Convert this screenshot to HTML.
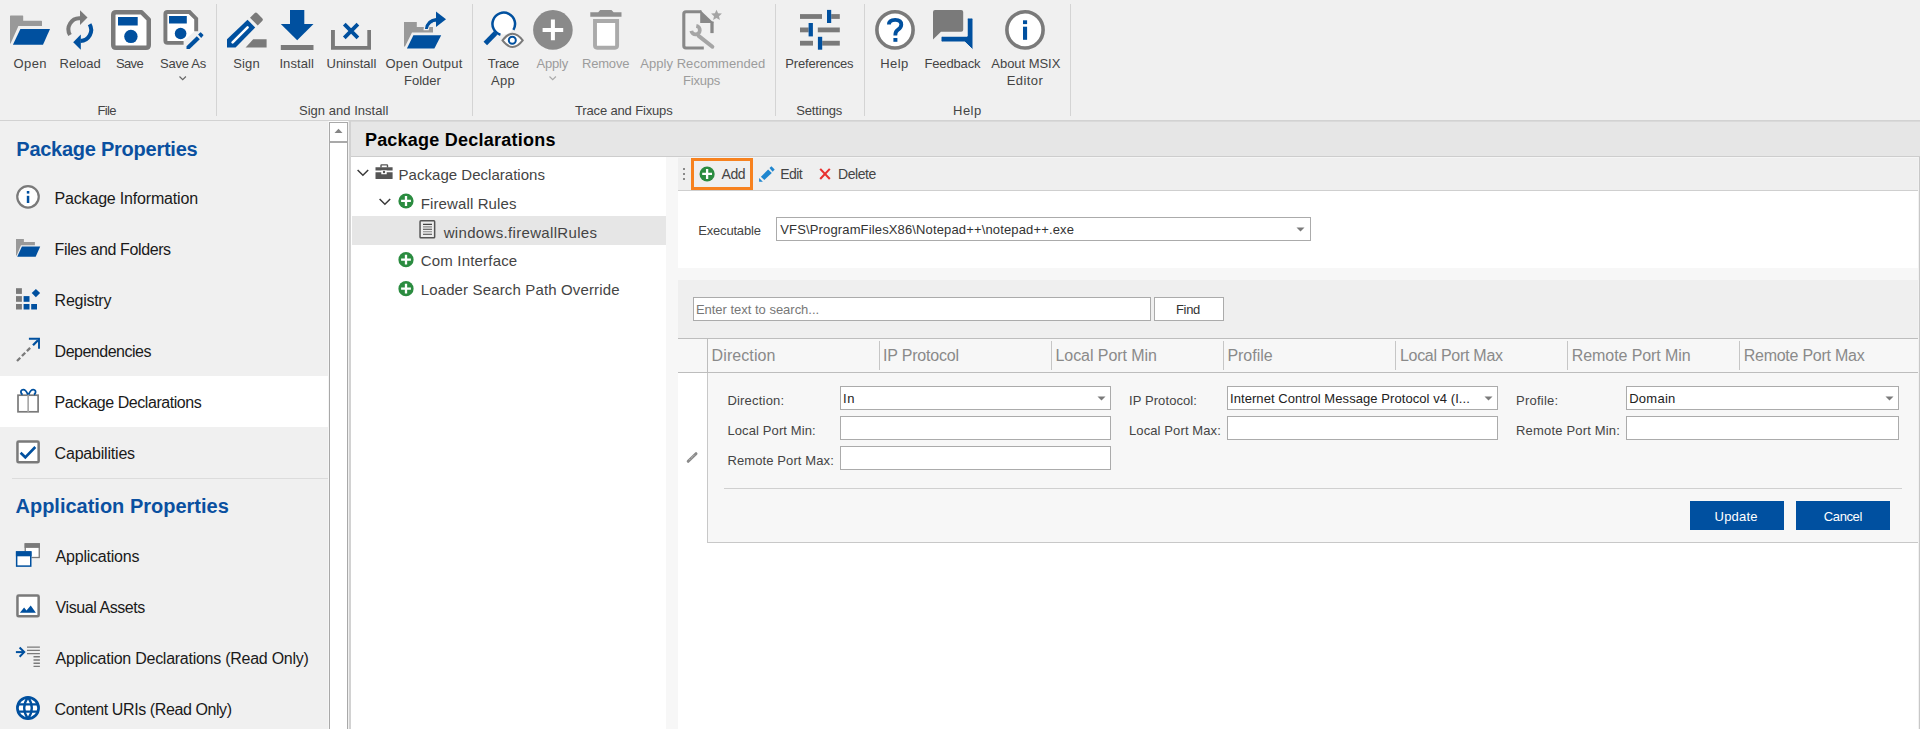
<!DOCTYPE html>
<html><head><meta charset="utf-8"><style>
*{margin:0;padding:0;box-sizing:border-box}
html,body{width:1920px;height:729px;overflow:hidden;background:#fff;font-family:"Liberation Sans",sans-serif}
.a{position:absolute}
.t{position:absolute;white-space:nowrap;font-family:"Liberation Sans",sans-serif}
svg{position:absolute;overflow:visible}
</style></head><body>
<!-- ribbon -->
<div class=a style="left:0;top:0;width:1920px;height:120px;background:#f0f0f0"></div>
<div class=a style="left:0;top:120px;width:1920px;height:1px;background:#d2d2d2"></div>
<div class=a style="left:216px;top:4px;width:1px;height:112px;background:#d4d4d4"></div>
<div class=a style="left:472px;top:4px;width:1px;height:112px;background:#d4d4d4"></div>
<div class=a style="left:775px;top:4px;width:1px;height:112px;background:#d4d4d4"></div>
<div class=a style="left:864px;top:4px;width:1px;height:112px;background:#d4d4d4"></div>
<div class=a style="left:1070px;top:4px;width:1px;height:112px;background:#d4d4d4"></div>
<!-- sidebar -->
<div class=a style="left:0;top:121px;width:329px;height:608px;background:#f0f0f0"></div>
<div class=a style="left:0;top:376px;width:328px;height:51px;background:#fff"></div>
<div class=a style="left:12px;top:478px;width:316px;height:1px;background:#dcdcdc"></div>
<div class=a style="left:328px;top:121px;width:1px;height:608px;background:#f6f6f6"></div>
<!-- scrollbar -->
<div class=a style="left:329px;top:122px;width:19px;height:607px;background:#fff;border:1px solid #a9a9a9;border-bottom:0"></div>
<div class=a style="left:329px;top:141px;width:19px;height:2px;background:#a9a9a9"></div>
<svg style="left:334px;top:128px" width="9" height="6"><path d="M0.5,5 L4.5,0.8 L8.5,5 Z" fill="#858585"/></svg>
<div class=a style="left:348px;top:121px;width:1px;height:608px;background:#f0f0f0"></div>
<div class=a style="left:349px;top:121px;width:2px;height:608px;background:#d2d2d2"></div>
<!-- header -->
<div class=a style="left:351px;top:121px;width:1569px;height:35px;background:#e6e6e6;border-top:1px solid #d9d9d9"></div>
<div class=a style="left:351px;top:156px;width:1569px;height:1px;background:#cdcdcd"></div>
<!-- tree panel -->
<div class=a style="left:351px;top:157px;width:315px;height:572px;background:#fff"></div>
<div class=a style="left:352px;top:216px;width:314px;height:29px;background:#e6e6e6"></div>
<div class=a style="left:666px;top:157px;width:12px;height:572px;background:#f7f7f7"></div>
<!-- right panel -->
<div class=a style="left:678px;top:157px;width:1242px;height:572px;background:#fff"></div>
<div class=a style="left:678px;top:157px;width:1240px;height:33px;background:#efefef;border-top:1px solid #f5f5f5"></div>
<div class=a style="left:678px;top:190px;width:1240px;height:1px;background:#cfcfcf"></div>
<div class=a style="left:1918px;top:157px;width:1px;height:572px;background:#f2f2f2"></div><div class=a style="left:1919px;top:157px;width:1px;height:572px;background:#c8c8c8"></div>
<div class=a style="left:678px;top:268px;width:1240px;height:12px;background:#f7f7f7"></div>
<div class=a style="left:678px;top:280px;width:1240px;height:58px;background:#efefef"></div>
<!-- exec combo -->
<div class=a style="left:776px;top:217px;width:535px;height:24px;background:#fff;border:1px solid #ababab"></div>
<svg style="left:1296px;top:227px" width="9" height="5"><path d="M0.5,0.5 H8.5 L4.5,4.5 Z" fill="#7a7a7a"/></svg>
<!-- search -->
<div class=a style="left:693px;top:297px;width:458px;height:24px;background:#fff;border:1px solid #ababab"></div>
<div class=a style="left:1154px;top:297px;width:70px;height:24px;background:#fff;border:1px solid #ababab"></div>
<!-- grid header -->
<div class=a style="left:678px;top:338px;width:1240px;height:1px;background:#bdbdbd"></div>
<div class=a style="left:678px;top:339px;width:1240px;height:33px;background:#f7f7f7"></div>
<div class=a style="left:678px;top:372px;width:1240px;height:1px;background:#bdbdbd"></div>
<div class=a style="left:707px;top:339px;width:1px;height:33px;background:#bdbdbd"></div>
<div class=a style="left:879px;top:341px;width:1px;height:29px;background:#c6c6c6"></div>
<div class=a style="left:1051px;top:341px;width:1px;height:29px;background:#c6c6c6"></div>
<div class=a style="left:1223px;top:341px;width:1px;height:29px;background:#c6c6c6"></div>
<div class=a style="left:1395px;top:341px;width:1px;height:29px;background:#c6c6c6"></div>
<div class=a style="left:1567px;top:341px;width:1px;height:29px;background:#c6c6c6"></div>
<div class=a style="left:1739px;top:341px;width:1px;height:29px;background:#c6c6c6"></div>
<!-- edit form -->
<div class=a style="left:707px;top:373px;width:1211px;height:170px;background:#f7f7f7;border-left:1px solid #c8c8c8;border-bottom:1px solid #c8c8c8"></div>
<div class=a style="left:724px;top:488px;width:1178px;height:1px;background:#d0d0d0"></div>
<div class=a style="left:840px;top:386px;width:271px;height:24px;background:#fff;border:1px solid #ababab"></div>
<div class=a style="left:840px;top:416px;width:271px;height:24px;background:#fff;border:1px solid #ababab"></div>
<div class=a style="left:840px;top:446px;width:271px;height:24px;background:#fff;border:1px solid #ababab"></div>
<div class=a style="left:1227px;top:386px;width:271px;height:24px;background:#fff;border:1px solid #ababab"></div>
<div class=a style="left:1227px;top:416px;width:271px;height:24px;background:#fff;border:1px solid #ababab"></div>
<div class=a style="left:1626px;top:386px;width:273px;height:24px;background:#fff;border:1px solid #ababab"></div>
<div class=a style="left:1626px;top:416px;width:273px;height:24px;background:#fff;border:1px solid #ababab"></div>
<svg style="left:1097px;top:396px" width="9" height="5"><path d="M0.5,0.5 H8.5 L4.5,4.5 Z" fill="#7a7a7a"/></svg>
<svg style="left:1484px;top:396px" width="9" height="5"><path d="M0.5,0.5 H8.5 L4.5,4.5 Z" fill="#7a7a7a"/></svg>
<svg style="left:1885px;top:396px" width="9" height="5"><path d="M0.5,0.5 H8.5 L4.5,4.5 Z" fill="#7a7a7a"/></svg>
<div class=a style="left:1690px;top:501px;width:94px;height:29px;background:#0050a0"></div>
<div class=a style="left:1796px;top:501px;width:94px;height:29px;background:#0050a0"></div>
<!-- ribbon icons; svg placed at 0,0 using absolute coordinates -->
<svg style="left:0;top:0" width="1100" height="60" viewBox="0 0 1100 60">
 <!-- Open -->
 <path d="M10.6,15.6 H22.6 Q23.2,15.6 23.2,16.2 V20.8 H41.4 Q42,20.8 42,21.4 V25.9 H18.4 L10.6,43.4 H10 V16.2 Q10,15.6 10.6,15.6 Z" fill="#999"/>
 <path d="M20.4,29 H50 L43,44.8 H12.9 Z" fill="#00509f"/>
 <!-- Reload -->
 <path d="M70,34.9 A11,11 0 0 1 80.3,18.3" fill="none" stroke="#7a7a7a" stroke-width="4"/>
 <path d="M80,10.3 L87.5,17.6 L80,24.9 Z" fill="#7a7a7a"/>
 <path d="M89.6,24.3 A11,11 0 0 1 80.5,40.9" fill="none" stroke="#00509f" stroke-width="4"/>
 <path d="M80.8,34.5 L73.2,42.3 L80.8,49.8 Z" fill="#00509f"/>
 <!-- Save -->
 <path d="M116,12.25 H141.5 L148.75,19.5 V45 Q148.75,47.75 146,47.75 H116 Q113.25,47.75 113.25,45 V15 Q113.25,12.25 116,12.25 Z" fill="#fff" stroke="#7a7a7a" stroke-width="4.5" stroke-linejoin="round"/>
 <rect x="118" y="17" width="19.7" height="8.5" fill="#00509f"/>
 <circle cx="130.9" cy="36.4" r="6.7" fill="#00509f"/>
 <!-- Save As -->
 <path d="M167.3,13.9 H189 L194.3,19.4 V31.5 L183.5,41 H167.3 Z" fill="#fff"/>
 <path d="M183.6,42.9 H167.5 Q165.4,42.9 165.4,40.8 V14.1 Q165.4,12 167.5,12 H189.5 L196.2,18.7 V31.3" fill="none" stroke="#7a7a7a" stroke-width="3.9"/>
 <rect x="169" y="16" width="17.8" height="7.5" fill="#00509f"/>
 <circle cx="180.6" cy="33.5" r="5.8" fill="#00509f"/>
 <path d="M186.5,46.2 L196.8,36.2 L199.8,39.3 L189.6,48.9 H186.5 Z" fill="#00509f"/>
 <path d="M198.1,34.5 L200.2,32.5 Q200.6,32.1 201,32.5 L203.3,34.8 Q203.7,35.2 203.3,35.6 L201.2,37.9 Z" fill="#00509f"/>
 <!-- Sign -->
 <path d="M227,47.5 V39.3 L247.5,19.8 L255.2,27.6 L235.6,47.5 Z" fill="#00509f"/>
 <path d="M232.6,42.3 L247.6,27.3" stroke="#fff" stroke-width="2.6" stroke-linecap="round"/>
 <path d="M250,17.8 L254.5,13.3 Q255.9,11.9 257.3,13.3 L262.2,18.2 Q263.6,19.6 262.2,21 L257.7,25.5 Z" fill="#7a7a7a"/>
 <path d="M245.6,47.5 L253.2,39.3 H266.6 V47.5 Z" fill="#7a7a7a"/>
 <!-- Install -->
 <rect x="290" y="10" width="14.3" height="14.5" fill="#00509f"/>
 <path d="M280.8,24 H313.5 L297.2,40.2 Z" fill="#00509f"/>
 <rect x="280.8" y="45" width="32.7" height="5" fill="#7a7a7a"/>
 <!-- Uninstall -->
 <path d="M331,29.9 H334.9 V45.9 H367.3 V29.9 H371 V49.7 H331 Z" fill="#7a7a7a"/>
 <path d="M344.3,24.2 L357.9,37.9 M357.9,24.2 L344.3,37.9" stroke="#00509f" stroke-width="3.8"/>
 <!-- Open Output Folder -->
 <path d="M404,21.9 H416.8 V27 H433 V32.4 H412 L405,46.5 H404 Z" fill="#999"/>
 <path d="M413.4,35.2 H441.2 L434.4,48.6 H406.9 Z" fill="#00509f"/>
 <path d="M424.2,29.6 Q425,18.4 437,17.2 L437.5,22 Q429.5,22.2 428.2,29.6 Z" fill="#00509f" stroke="#f0f0f0" stroke-width="1.2"/>
 <path d="M436,11.5 L446,19.2 L436,27 Z" fill="#00509f"/>
 <!-- Trace App -->
 <path d="M485.3,43.4 L495.6,33.1" stroke="#00509f" stroke-width="5"/>
 <circle cx="503.7" cy="23.9" r="10.5" fill="#fff"/>
 <path d="M513.4,29.8 A11.3,11.3 0 1 0 500.45,34.7" fill="none" stroke="#00509f" stroke-width="2.5"/>
 <path d="M502.5,40.3 Q512.6,27 522.7,40.3 Q512.6,53.6 502.5,40.3 Z" fill="#fff" stroke="#7a7a7a" stroke-width="2"/>
 <circle cx="512.3" cy="40.3" r="3.5" fill="#fff" stroke="#00509f" stroke-width="2"/>
 <!-- Apply -->
 <circle cx="552.9" cy="29.9" r="19.8" fill="#8a8a8a"/>
 <path d="M542.6,29.9 H563.2 M552.9,19.6 V40.2" stroke="#fff" stroke-width="4"/>
 <!-- Remove -->
 <path d="M590.3,12.2 H598.2 L600.2,9.9 H611.5 L613.6,12.2 H621.5 V16.7 H590.3 Z" fill="#8f8f8f"/>
 <path d="M595,21 H617.1 V45.6 Q617.1,47.7 615,47.7 H597.1 Q595,47.7 595,45.6 Z" fill="#fff" stroke="#aaa" stroke-width="3.9"/>
 <!-- Fixups -->
 <path d="M703.8,48 H686 Q683.8,48 683.8,45.8 V13.9 Q683.8,11.7 686,11.7 H701.5" fill="none" stroke="#888" stroke-width="3.1"/>
 <path d="M712,21.5 V33.1" stroke="#888" stroke-width="3.3"/>
 <path d="M700.2,10.1 L713.8,23 H700.2 Z" fill="#888"/>
 <path d="M698.6,35.9 L712.4,46.8" stroke="#a5a5a5" stroke-width="3.9" stroke-linecap="round"/>
 <path d="M696.3,25.9 A4.3,4.3 0 1 1 691.3,30.9" fill="none" stroke="#a5a5a5" stroke-width="3.7"/>
 <path d="M716.5,9.8 L718.1,13.3 L721.9,13.6 L719,16.2 L719.9,19.9 L716.5,17.9 L713.1,19.9 L714,16.2 L711.1,13.6 L714.9,13.3 Z" fill="#a5a5a5"/>
 <!-- Preferences -->
 <g fill="#7a7a7a">
  <rect x="800" y="14.1" width="22" height="4.8"/><rect x="831.2" y="14.1" width="8.6" height="4.8"/>
  <rect x="800" y="27.5" width="8.6" height="4.8"/><rect x="817.8" y="27.5" width="22" height="4.8"/>
  <rect x="800" y="40.8" width="13" height="4.8"/><rect x="822.2" y="40.8" width="17.6" height="4.8"/>
 </g>
 <g fill="#00509f">
  <rect x="827" y="9.9" width="4.2" height="13.1"/>
  <rect x="808.6" y="23" width="4.3" height="13.4"/>
  <rect x="817.9" y="36.8" width="4.3" height="12.9"/>
 </g>
 <!-- Help -->
 <circle cx="895" cy="29.9" r="18.1" fill="#fff" stroke="#7a7a7a" stroke-width="3.6"/>
 <path d="M888.9,24.6 Q888.9,19.8 895.2,19.8 Q901.3,19.8 901.3,24.6 Q901.3,27.6 897.8,29.9 Q895.3,31.5 895.3,35.4" fill="none" stroke="#00509f" stroke-width="3.8"/>
 <rect x="893.4" y="38" width="4" height="3.8" fill="#00509f"/>
 <!-- Feedback -->
 <path d="M935,9.9 H961.2 Q963.2,9.9 963.2,11.9 V29.8 Q963.2,31.8 961.2,31.8 H941 L933,39.5 V11.9 Q933,9.9 935,9.9 Z" fill="#7a7a7a"/>
 <path d="M967.2,19.2 Q967.2,18 968.4,18 H971.8 Q973,18 973,19.2 V49.9 L964.8,42 H942.5 Q941,42 941,40.5 V37.7 Q941,36.2 942.5,36.2 H967.2 Z" fill="#00509f" stroke="#f0f0f0" stroke-width="1"/>
 <!-- About -->
 <circle cx="1025" cy="29.9" r="18.1" fill="#fff" stroke="#7a7a7a" stroke-width="3.6"/>
 <rect x="1023" y="20.3" width="4.1" height="3.8" fill="#00509f"/>
 <rect x="1023" y="26.7" width="4.1" height="13.1" fill="#00509f"/>
 <!-- dropdown chevrons -->
 <path d="M179.5,76.5 L182.7,79.6 L185.9,76.5" fill="none" stroke="#666" stroke-width="1.2"/>
 <path d="M549.5,76.5 L552.7,79.6 L555.9,76.5" fill="none" stroke="#aaa" stroke-width="1.2"/>
</svg>

<svg style="left:0;top:120px" width="1920" height="609" viewBox="0 120 1920 609">
 <!-- sidebar: info -->
 <circle cx="28" cy="196.8" r="10.75" fill="#fff" stroke="#7a7a7a" stroke-width="2.2"/>
 <rect x="26.8" y="191" width="2.5" height="2.6" fill="#00509f"/>
 <rect x="26.8" y="195.8" width="2.5" height="7.2" fill="#00509f"/>
 <!-- folder -->
 <path d="M16,238.9 H23.9 V242.1 H34.9 V245.2 H21 L16.7,255.5 H16 Z" fill="#999"/>
 <path d="M21.9,246.6 H40.2 L35.7,256.7 H17.2 Z" fill="#00509f"/>
 <!-- registry -->
 <g fill="#7a7a7a"><rect x="16" y="288.2" width="5.9" height="5.7"/><rect x="16" y="296.1" width="5.9" height="5.7"/><rect x="16" y="304" width="5.9" height="5.5"/></g>
 <g fill="#00509f"><rect x="23.6" y="296.1" width="5.9" height="5.7"/><rect x="23.6" y="304" width="5.9" height="5.5"/><rect x="31.2" y="304" width="5.8" height="5.5"/>
 <path d="M35.9,288.9 L40.1,293.1 L35.9,297.3 L31.7,293.1 Z"/></g>
 <!-- dependencies -->
 <path d="M17,361 L31.5,346.5" stroke="#7a7a7a" stroke-width="2.3" stroke-dasharray="4.6 2.4"/>
 <path d="M33,345.3 L38,340.3" stroke="#00509f" stroke-width="2.3"/>
 <path d="M28.9,338.8 H39 V348.8" fill="none" stroke="#00509f" stroke-width="1.9"/>
 <!-- gift -->
 <rect x="18" y="395.2" width="20.1" height="16.6" fill="#fff" stroke="#7a7a7a" stroke-width="1.7"/>
 <rect x="27.3" y="395.2" width="1.7" height="16.6" fill="#aaa"/>
 <path d="M27.9,394.6 C26.5,391 24.8,389.6 23.2,389.6 C21.2,389.6 20.6,391.4 21.1,392.9 C21.4,393.8 22,394.3 22.6,394.6 M28.6,394.6 C30,391 31.7,389.6 33.3,389.6 C35.3,389.6 35.9,391.4 35.4,392.9 C35.1,393.8 34.5,394.3 33.9,394.6" fill="none" stroke="#00509f" stroke-width="1.8"/>
 <!-- checkbox -->
 <rect x="17.45" y="441.45" width="21.2" height="20.9" rx="1.2" fill="#fff" stroke="#7a7a7a" stroke-width="2.5"/>
 <path d="M20.6,452.8 L25.3,457.3 L35.3,447" fill="none" stroke="#00509f" stroke-width="2.6"/>
 <!-- applications -->
 <rect x="25.25" y="543.9" width="14" height="13.6" fill="#fff" stroke="#7a7a7a" stroke-width="1.3"/>
 <rect x="24.6" y="543.2" width="15.3" height="4.7" fill="#7a7a7a"/>
 <rect x="15.9" y="551.3" width="15.6" height="15.6" fill="#f0f0f0"/>
 <rect x="16.65" y="552" width="14.1" height="14.1" fill="#fff" stroke="#00509f" stroke-width="1.5"/>
 <rect x="15.9" y="551.3" width="15.6" height="5" fill="#00509f"/>
 <!-- visual assets -->
 <rect x="17.45" y="595.45" width="21.2" height="20.9" rx="1.2" fill="#fff" stroke="#7a7a7a" stroke-width="2.5"/>
 <path d="M19.9,612.7 L24.1,607.6 L26.5,610.5 L30.7,605.6 L35.9,612.7 Z" fill="#00509f"/>
 <!-- app declarations -->
 <path d="M15.9,652.1 H23.5" stroke="#00509f" stroke-width="2"/>
 <path d="M19.6,647.5 L24.2,652.1 L19.6,656.7" fill="none" stroke="#00509f" stroke-width="2"/>
 <g stroke="#7a7a7a" stroke-width="1.4">
  <path d="M27,647.1 H39.9 M27,650.4 H39.9 M27,653.6 H39.9 M33.5,656.8 H39.9 M33.5,660 H39.9 M33.5,663.2 H39.9 M33.5,666.4 H39.9"/>
 </g>
 <!-- globe -->
 <circle cx="28" cy="708" r="10.6" fill="#fff" stroke="#00509f" stroke-width="2.7"/>
 <path d="M17,704.3 H39 M17,711.6 H39" stroke="#00509f" stroke-width="2.3"/>
 <path d="M28,697 Q20.4,708 28,719 M28,697 Q35.6,708 28,719" fill="none" stroke="#00509f" stroke-width="2.3"/>
 <!-- tree -->
 <path d="M357.6,170 L362.9,175.3 L368.2,170" fill="none" stroke="#3a3a3a" stroke-width="1.5"/>
 <path d="M379.6,199 L384.9,204.3 L390.2,199" fill="none" stroke="#3a3a3a" stroke-width="1.5"/>
 <path d="M381,167.4 V165.5 Q381,164.9 381.6,164.9 H386.9 Q387.5,164.9 387.5,165.5 V167.4" fill="none" stroke="#555" stroke-width="1.4"/>
 <path d="M375.5,167.2 H392.6 V170.6 H386.6 V170.2 H381.4 V170.6 H375.5 Z" fill="#555"/>
 <path d="M375.5,172.3 H381.3 V174.2 H386.7 V172.3 H392.6 V178.6 Q392.6,179.1 392.1,179.1 H376 Q375.5,179.1 375.5,178.6 Z" fill="#555"/>
 <circle cx="384" cy="172" r="1.2" fill="#555"/>
 <g>
  <circle cx="406" cy="201" r="7.6" fill="#2b8c40"/>
  <path d="M401.1,200.9 H410.9 M406,196.1 V205.9" stroke="#fff" stroke-width="2.3"/>
  <circle cx="406" cy="259.7" r="7.6" fill="#2b8c40"/>
  <path d="M401.1,259.6 H410.9 M406,254.8 V264.6" stroke="#fff" stroke-width="2.3"/>
  <circle cx="406" cy="288.7" r="7.6" fill="#2b8c40"/>
  <path d="M401.1,288.6 H410.9 M406,283.8 V293.6" stroke="#fff" stroke-width="2.3"/>
 </g>
 <rect x="420.05" y="220.85" width="14.6" height="17" rx="0.8" fill="#eee" stroke="#555" stroke-width="1.5"/>
 <path d="M423,224.4 H432 M423,229.3 H432 M423,234.3 H432" stroke="#444" stroke-width="1.1"/>
 <path d="M423,226.9 H432 M423,231.8 H432" stroke="#888" stroke-width="1.1"/>
 <!-- toolbar -->
 <g fill="#8a8a8a"><rect x="683" y="168" width="2" height="2"/><rect x="683" y="173" width="2" height="2"/><rect x="683" y="178" width="2" height="2"/></g>
 <rect x="692.5" y="159.5" width="59" height="29" fill="none" stroke="#f7821f" stroke-width="3"/>
 <circle cx="707.1" cy="174" r="7.6" fill="#2b8c40"/>
 <path d="M702.2,173.9 H712 M707.1,169.1 V178.9" stroke="#fff" stroke-width="2.3"/>
 <path d="M760.9,176.8 L768.1,169.6 L771.8,172.9 L764.3,180.1 Z" fill="#1f86cf"/>
 <path d="M769.5,168.1 L771.4,166.3 L774.7,169.6 L772.6,171.7 Z" fill="#1f86cf"/>
 <path d="M759.1,178.1 L762.9,181.8 H759.1 Z" fill="#1f86cf"/>
 <path d="M820.2,168.9 L829.8,179 M829.8,168.9 L820.2,179" stroke="#e8312f" stroke-width="2.1"/>
 <!-- form pencil -->
 <path d="M688.2,461.3 L696,453.7" stroke="#8a8a8a" stroke-width="3" stroke-linecap="round"/>
 <path d="M689.5,459.8 L694.8,454.6" stroke="#ddd" stroke-width="0.8" stroke-dasharray="1 1"/>
</svg>


<div class=t style='left:13.60px;top:51.00px;font-size:13px;line-height:26px;font-weight:normal;color:#444;letter-spacing:0.367px'>Open</div><div class=t style='left:59.50px;top:51.00px;font-size:13px;line-height:26px;font-weight:normal;color:#444;letter-spacing:0.020px'>Reload</div><div class=t style='left:116.00px;top:51.00px;font-size:13px;line-height:26px;font-weight:normal;color:#444;letter-spacing:-0.667px'>Save</div><div class=t style='left:160.00px;top:51.00px;font-size:13px;line-height:26px;font-weight:normal;color:#444;letter-spacing:-0.250px'>Save As</div><div class=t style='left:233.30px;top:51.00px;font-size:13px;line-height:26px;font-weight:normal;color:#444;letter-spacing:0.100px'>Sign</div><div class=t style='left:279.40px;top:51.00px;font-size:13px;line-height:26px;font-weight:normal;color:#444;letter-spacing:0.100px'>Install</div><div class=t style='left:326.50px;top:51.00px;font-size:13px;line-height:26px;font-weight:normal;color:#444;letter-spacing:0.000px'>Uninstall</div><div class=t style='left:385.50px;top:51.00px;font-size:13px;line-height:26px;font-weight:normal;color:#444;letter-spacing:0.250px'>Open Output</div><div class=t style='left:404.00px;top:67.50px;font-size:13px;line-height:26px;font-weight:normal;color:#444;letter-spacing:0.000px'>Folder</div><div class=t style='left:487.80px;top:51.00px;font-size:13px;line-height:26px;font-weight:normal;color:#444;letter-spacing:-0.300px'>Trace</div><div class=t style='left:491.00px;top:67.50px;font-size:13px;line-height:26px;font-weight:normal;color:#444;letter-spacing:0.250px'>App</div><div class=t style='left:536.50px;top:51.00px;font-size:13px;line-height:26px;font-weight:normal;color:#9c9c9c;letter-spacing:-0.200px'>Apply</div><div class=t style='left:582.00px;top:51.00px;font-size:13px;line-height:26px;font-weight:normal;color:#9c9c9c;letter-spacing:-0.200px'>Remove</div><div class=t style='left:640.30px;top:51.00px;font-size:13px;line-height:26px;font-weight:normal;color:#9c9c9c;letter-spacing:0.044px'>Apply Recommended</div><div class=t style='left:683.00px;top:67.50px;font-size:13px;line-height:26px;font-weight:normal;color:#9c9c9c;letter-spacing:-0.200px'>Fixups</div><div class=t style='left:785.30px;top:51.00px;font-size:13px;line-height:26px;font-weight:normal;color:#444;letter-spacing:-0.180px'>Preferences</div><div class=t style='left:880.30px;top:51.00px;font-size:13px;line-height:26px;font-weight:normal;color:#444;letter-spacing:0.367px'>Help</div><div class=t style='left:924.50px;top:51.00px;font-size:13px;line-height:26px;font-weight:normal;color:#444;letter-spacing:-0.157px'>Feedback</div><div class=t style='left:991.30px;top:51.00px;font-size:13px;line-height:26px;font-weight:normal;color:#444;letter-spacing:-0.033px'>About MSIX</div><div class=t style='left:1006.80px;top:67.50px;font-size:13px;line-height:26px;font-weight:normal;color:#444;letter-spacing:0.400px'>Editor</div><div class=t style='left:97.60px;top:98.00px;font-size:13px;line-height:26px;font-weight:normal;color:#444;letter-spacing:-0.700px'>File</div><div class=t style='left:299.00px;top:98.00px;font-size:13px;line-height:26px;font-weight:normal;color:#444;letter-spacing:0.027px'>Sign and Install</div><div class=t style='left:575.00px;top:98.00px;font-size:13px;line-height:26px;font-weight:normal;color:#444;letter-spacing:-0.153px'>Trace and Fixups</div><div class=t style='left:796.20px;top:98.00px;font-size:13px;line-height:26px;font-weight:normal;color:#444;letter-spacing:-0.114px'>Settings</div><div class=t style='left:953.00px;top:98.00px;font-size:13px;line-height:26px;font-weight:normal;color:#444;letter-spacing:0.500px'>Help</div><div class=t style='left:16.30px;top:128.50px;font-size:20px;line-height:40px;font-weight:bold;color:#0a50a0;letter-spacing:-0.253px'>Package Properties</div><div class=t style='left:54.60px;top:183.30px;font-size:16px;line-height:32px;font-weight:normal;color:#1a1a1a;letter-spacing:-0.183px'>Package Information</div><div class=t style='left:54.60px;top:234.30px;font-size:16px;line-height:32px;font-weight:normal;color:#1a1a1a;letter-spacing:-0.387px'>Files and Folders</div><div class=t style='left:54.60px;top:285.30px;font-size:16px;line-height:32px;font-weight:normal;color:#1a1a1a;letter-spacing:-0.271px'>Registry</div><div class=t style='left:54.60px;top:336.30px;font-size:16px;line-height:32px;font-weight:normal;color:#1a1a1a;letter-spacing:-0.500px'>Dependencies</div><div class=t style='left:54.60px;top:387.30px;font-size:16px;line-height:32px;font-weight:normal;color:#1a1a1a;letter-spacing:-0.447px'>Package Declarations</div><div class=t style='left:54.60px;top:438.30px;font-size:16px;line-height:32px;font-weight:normal;color:#1a1a1a;letter-spacing:-0.200px'>Capabilities</div><div class=t style='left:15.50px;top:486.00px;font-size:20px;line-height:40px;font-weight:bold;color:#0a50a0;letter-spacing:-0.005px'>Application Properties</div><div class=t style='left:55.60px;top:540.80px;font-size:16px;line-height:32px;font-weight:normal;color:#1a1a1a;letter-spacing:-0.218px'>Applications</div><div class=t style='left:55.60px;top:591.80px;font-size:16px;line-height:32px;font-weight:normal;color:#1a1a1a;letter-spacing:-0.425px'>Visual Assets</div><div class=t style='left:55.60px;top:642.80px;font-size:16px;line-height:32px;font-weight:normal;color:#1a1a1a;letter-spacing:-0.260px'>Application Declarations (Read Only)</div><div class=t style='left:54.60px;top:693.80px;font-size:16px;line-height:32px;font-weight:normal;color:#1a1a1a;letter-spacing:-0.404px'>Content URIs (Read Only)</div><div class=t style='left:364.90px;top:122.00px;font-size:18px;line-height:36px;font-weight:bold;color:#000;letter-spacing:0.232px'>Package Declarations</div><div class=t style='left:398.60px;top:160.00px;font-size:15px;line-height:30px;font-weight:normal;color:#444;letter-spacing:0.021px'>Package Declarations</div><div class=t style='left:420.70px;top:188.80px;font-size:15px;line-height:30px;font-weight:normal;color:#444;letter-spacing:0.123px'>Firewall Rules</div><div class=t style='left:443.70px;top:217.60px;font-size:15px;line-height:30px;font-weight:normal;color:#444;letter-spacing:0.330px'>windows.firewallRules</div><div class=t style='left:420.70px;top:246.40px;font-size:15px;line-height:30px;font-weight:normal;color:#444;letter-spacing:0.192px'>Com Interface</div><div class=t style='left:420.70px;top:275.20px;font-size:15px;line-height:30px;font-weight:normal;color:#444;letter-spacing:0.142px'>Loader Search Path Override</div><div class=t style='left:721.50px;top:160.00px;font-size:14px;line-height:28px;font-weight:normal;color:#444;letter-spacing:-0.400px'>Add</div><div class=t style='left:780.20px;top:160.00px;font-size:14px;line-height:28px;font-weight:normal;color:#444;letter-spacing:-0.533px'>Edit</div><div class=t style='left:838.00px;top:160.00px;font-size:14px;line-height:28px;font-weight:normal;color:#444;letter-spacing:-0.460px'>Delete</div><div class=t style='left:698.20px;top:218.20px;font-size:13px;line-height:26px;font-weight:normal;color:#444;letter-spacing:-0.178px'>Executable</div><div class=t style='left:780.30px;top:216.80px;font-size:13px;line-height:26px;font-weight:normal;color:#333;letter-spacing:0.143px'>VFS\ProgramFilesX86\Notepad++\notepad++.exe</div><div class=t style='left:695.90px;top:297.30px;font-size:13px;line-height:26px;font-weight:normal;color:#777;letter-spacing:-0.014px'>Enter text to search...</div><div class=t style='left:1176.00px;top:297.20px;font-size:13px;line-height:26px;font-weight:normal;color:#333;letter-spacing:-0.333px'>Find</div><div class=t style='left:711.60px;top:340.30px;font-size:16px;line-height:32px;font-weight:normal;color:#8a8a8a;letter-spacing:0.087px'>Direction</div><div class=t style='left:883.00px;top:340.30px;font-size:16px;line-height:32px;font-weight:normal;color:#8a8a8a;letter-spacing:-0.200px'>IP Protocol</div><div class=t style='left:1055.50px;top:340.30px;font-size:16px;line-height:32px;font-weight:normal;color:#8a8a8a;letter-spacing:-0.069px'>Local Port Min</div><div class=t style='left:1227.40px;top:340.30px;font-size:16px;line-height:32px;font-weight:normal;color:#8a8a8a;letter-spacing:-0.017px'>Profile</div><div class=t style='left:1399.90px;top:340.30px;font-size:16px;line-height:32px;font-weight:normal;color:#8a8a8a;letter-spacing:-0.277px'>Local Port Max</div><div class=t style='left:1571.80px;top:340.30px;font-size:16px;line-height:32px;font-weight:normal;color:#8a8a8a;letter-spacing:-0.086px'>Remote Port Min</div><div class=t style='left:1743.70px;top:340.30px;font-size:16px;line-height:32px;font-weight:normal;color:#8a8a8a;letter-spacing:-0.250px'>Remote Port Max</div><div class=t style='left:727.40px;top:388.20px;font-size:13px;line-height:26px;font-weight:normal;color:#444;letter-spacing:0.200px'>Direction:</div><div class=t style='left:727.40px;top:418.20px;font-size:13px;line-height:26px;font-weight:normal;color:#444;letter-spacing:0.114px'>Local Port Min:</div><div class=t style='left:727.40px;top:448.20px;font-size:13px;line-height:26px;font-weight:normal;color:#444;letter-spacing:0.107px'>Remote Port Max:</div><div class=t style='left:1129.00px;top:388.20px;font-size:13px;line-height:26px;font-weight:normal;color:#444;letter-spacing:0.091px'>IP Protocol:</div><div class=t style='left:1129.00px;top:418.20px;font-size:13px;line-height:26px;font-weight:normal;color:#444;letter-spacing:0.107px'>Local Port Max:</div><div class=t style='left:1516.00px;top:388.20px;font-size:13px;line-height:26px;font-weight:normal;color:#444;letter-spacing:0.243px'>Profile:</div><div class=t style='left:1516.00px;top:418.20px;font-size:13px;line-height:26px;font-weight:normal;color:#444;letter-spacing:0.180px'>Remote Port Min:</div><div class=t style='left:842.90px;top:386.00px;font-size:13px;line-height:26px;font-weight:normal;color:#222;letter-spacing:0.800px'>In</div><div class=t style='left:1230.00px;top:386.00px;font-size:13px;line-height:26px;font-weight:normal;color:#222;letter-spacing:0.068px'>Internet Control Message Protocol v4 (I...</div><div class=t style='left:1629.20px;top:386.00px;font-size:13px;line-height:26px;font-weight:normal;color:#222;letter-spacing:0.260px'>Domain</div><div class=t style='left:1714.60px;top:503.60px;font-size:13px;line-height:26px;font-weight:normal;color:#fff;letter-spacing:0.180px'>Update</div><div class=t style='left:1823.75px;top:503.60px;font-size:13px;line-height:26px;font-weight:normal;color:#fff;letter-spacing:-0.370px'>Cancel</div>
</body></html>
